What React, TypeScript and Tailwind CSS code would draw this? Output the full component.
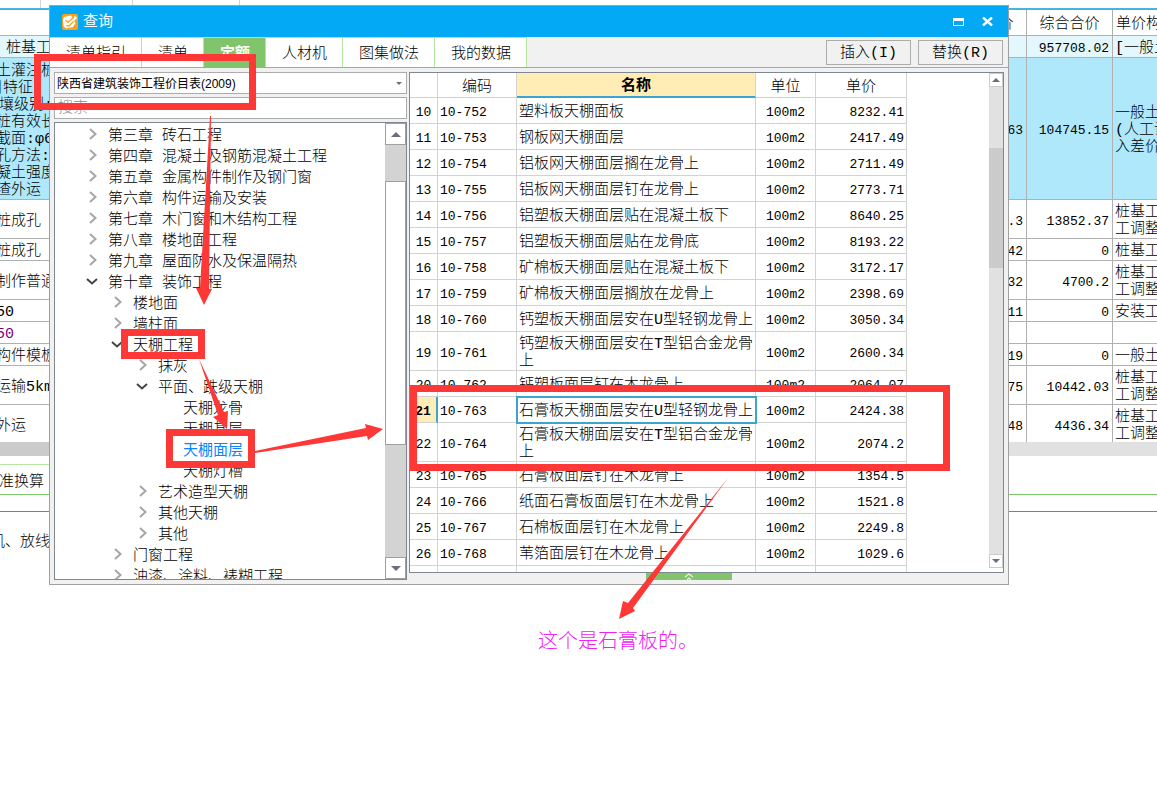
import { useState } from 'react';
import clsx from 'clsx';

type TreeItem = { label: string; level: number; state?: 'open' | 'closed' };
type Quota = { no: number; code: string; name: string; price: string; tall?: boolean };
type BillRow = {
  height: string;
  bg?: string;
  name: string[];
  nameClass?: string;
  unit: string;
  total: string;
  file: string[];
};

const TABS = ['清单指引', '清单', '定额', '人材机', '图集做法', '我的数据'];

const TREE: TreeItem[] = [
  { label: '第三章 砖石工程', level: 1, state: 'closed' },
  { label: '第四章 混凝土及钢筋混凝土工程', level: 1, state: 'closed' },
  { label: '第五章 金属构件制作及钢门窗', level: 1, state: 'closed' },
  { label: '第六章 构件运输及安装', level: 1, state: 'closed' },
  { label: '第七章 木门窗和木结构工程', level: 1, state: 'closed' },
  { label: '第八章 楼地面工程', level: 1, state: 'closed' },
  { label: '第九章 屋面防水及保温隔热', level: 1, state: 'closed' },
  { label: '第十章 装饰工程', level: 1, state: 'open' },
  { label: '楼地面', level: 2, state: 'closed' },
  { label: '墙柱面', level: 2, state: 'closed' },
  { label: '天棚工程', level: 2, state: 'open' },
  { label: '抹灰', level: 3, state: 'closed' },
  { label: '平面、跌级天棚', level: 3, state: 'open' },
  { label: '天棚龙骨', level: 4 },
  { label: '天棚基层', level: 4 },
  { label: '天棚面层', level: 4 },
  { label: '天棚灯槽', level: 4 },
  { label: '艺术造型天棚', level: 3, state: 'closed' },
  { label: '其他天棚', level: 3, state: 'closed' },
  { label: '其他', level: 3, state: 'closed' },
  { label: '门窗工程', level: 2, state: 'closed' },
  { label: '油漆、涂料、裱糊工程', level: 2, state: 'closed' },
];

const INDENT: Record<number, string> = {
  1: 'pl-[28px]',
  2: 'pl-[53px]',
  3: 'pl-[78px]',
  4: 'pl-[103px]',
};

const QUOTAS: Quota[] = [
  { no: 10, code: '10-752', name: '塑料板天棚面板', price: '8232.41' },
  { no: 11, code: '10-753', name: '钢板网天棚面层', price: '2417.49' },
  { no: 12, code: '10-754', name: '铝板网天棚面层搁在龙骨上', price: '2711.49' },
  { no: 13, code: '10-755', name: '铝板网天棚面层钉在龙骨上', price: '2773.71' },
  { no: 14, code: '10-756', name: '铝塑板天棚面层贴在混凝土板下', price: '8640.25' },
  { no: 15, code: '10-757', name: '铝塑板天棚面层贴在龙骨底', price: '8193.22' },
  { no: 16, code: '10-758', name: '矿棉板天棚面层贴在混凝土板下', price: '3172.17' },
  { no: 17, code: '10-759', name: '矿棉板天棚面层搁放在龙骨上', price: '2398.69' },
  { no: 18, code: '10-760', name: '钙塑板天棚面层安在U型轻钢龙骨上', price: '3050.34' },
  { no: 19, code: '10-761', name: '钙塑板天棚面层安在T型铝合金龙骨上', price: '2600.34', tall: true },
  { no: 20, code: '10-762', name: '钙塑板面层钉在木龙骨上', price: '2064.07' },
  { no: 21, code: '10-763', name: '石膏板天棚面层安在U型轻钢龙骨上', price: '2424.38' },
  { no: 22, code: '10-764', name: '石膏板天棚面层安在T型铝合金龙骨上', price: '2074.2', tall: true },
  { no: 23, code: '10-765', name: '石膏板面层钉在木龙骨上', price: '1354.5' },
  { no: 24, code: '10-766', name: '纸面石膏板面层钉在木龙骨上', price: '1521.8' },
  { no: 25, code: '10-767', name: '石棉板面层钉在木龙骨上', price: '2249.8' },
  { no: 26, code: '10-768', name: '苇箔面层钉在木龙骨上', price: '1029.6' },
];

const PILE = ['桩基工', '工调整'];

const BILL: BillRow[] = [
  { height: 'h-[22px]', bg: 'bg-[#e3f7fc]', name: ['桩基工程'], nameClass: 'pl-[17px]', unit: '', total: '957708.02', file: ['[一般土'] },
  {
    height: 'h-[142px]',
    bg: 'bg-[#b0e8fb]',
    name: ['土灌注桩', '目特征:', '壤级别:', '桩有效长', '截面:φ60', '孔方法:', '凝土强度', '渣外运'],
    unit: '63',
    total: '104745.15',
    file: ['一般土石', '(人工调', '入差价'],
  },
  { height: 'h-[39px]', name: ['桩成孔'], unit: '.3', total: '13852.37', file: PILE },
  { height: 'h-[22px]', name: ['桩成孔'], unit: '42', total: '0', file: ['桩基工'] },
  { height: 'h-[39px]', name: ['制作普通'], unit: '32', total: '4700.2', file: PILE },
  { height: 'h-[22px]', name: ['50'], unit: '11', total: '0', file: ['安装工'] },
  { height: 'h-[22px]', name: ['50'], nameClass: 'pl-[7px] text-[#800080]', unit: '', total: '', file: [''] },
  { height: 'h-[22px]', name: ['构件模板'], unit: '19', total: '0', file: ['一般土'] },
  { height: 'h-[39px]', name: ['运输5km'], unit: '75', total: '10442.03', file: PILE },
  { height: 'h-[39px]', name: ['外运'], unit: '48', total: '4436.34', file: PILE },
];

function Triangle({ up, small }: { up?: boolean; small?: boolean }) {
  return (
    <svg viewBox="0 0 10 5" className={small ? 'w-2 h-1' : 'w-[10px] h-[5px]'} fill="#6b6d7c">
      <path d={up ? 'M0 5 L5 0 L10 5Z' : 'M0 0 L5 5 L10 0Z'} />
    </svg>
  );
}

function Chevron({ open }: { open: boolean }) {
  return (
    <svg viewBox="0 0 12 12" className="-mt-[5px] h-3 w-3" fill="none" strokeWidth="2" stroke={open ? '#444444' : '#a6a6a6'}>
      <path d={open ? 'M1 4 L6 8.5 L11 4' : 'M4 1 L9.5 6 L4 11'} />
    </svg>
  );
}

function BillSheet() {
  const cell = 'border-r border-b border-[#b0b0b0] whitespace-nowrap px-0 pt-1 pb-0';
  return (
    <div className="overflow-hidden">
      <div className="flex h-2">
        <div className="w-[41px] border-r border-[#d3d3d3]" />
        <div className="w-[92px] border-r border-[#d3d3d3]" />
        <div className="w-[107px] border-r border-[#d3d3d3]" />
      </div>
      <table className="-ml-[11px] w-[calc(100%+64px)] table-fixed border-separate border-spacing-0 border-t-2 border-[#44b4e4] leading-[17px]">
        <colgroup>
          <col className="w-[300px]" />
          <col />
          <col className="w-[86px]" />
          <col className="w-[86px]" />
          <col className="w-[97px]" />
        </colgroup>
        <thead>
          <tr className="h-[26px]">
            <th className={cell} />
            <th className={cell} />
            <th className={clsx(cell, 'font-light')}>综合单价</th>
            <th className={clsx(cell, 'font-light')}>综合合价</th>
            <th className={clsx(cell, 'pl-[3px] text-left font-light')}>单价构成</th>
          </tr>
        </thead>
        <tbody>
          {BILL.map((row, i) => (
            <tr key={i} className={clsx(row.height, row.bg)}>
              <td className={clsx(cell, row.nameClass ?? 'pl-[7px]')}>
                {row.name.map((line, n) => (
                  <div key={n} className={clsx(line === '目特征:' && '-ml-2', line === '壤级别:' && 'ml-[3px]')}>
                    {line}
                  </div>
                ))}
              </td>
              <td className={cell} />
              <td className={clsx(cell, 'pr-[3px] text-right text-[13px]')}>{row.unit}</td>
              <td className={clsx(cell, 'pr-[3px] text-right text-[13px]')}>{row.total}</td>
              <td className={clsx(cell, 'pl-[2px]')}>
                {row.file.map((line, n) => (
                  <div key={n}>{line}</div>
                ))}
              </td>
            </tr>
          ))}
        </tbody>
      </table>
      <div className="relative -mt-[2px] flex h-[14px] bg-[#e1e1e1]">
        <div className="w-1/2 bg-[#cbcbcb]" />
      </div>
      <div className="mt-2 flex h-[31px] border-b border-b-[#7cc767]">
        <div className="w-[200px] border-t border-r border-[#b4e6a0] leading-[35px]">
          <span className="-ml-px">准换算</span>
        </div>
      </div>
      <div className="mt-4 border-t border-[#808080] pt-5">
        <span className="-ml-[10px]">机、放线</span>
      </div>
    </div>
  );
}

function TreePanel() {
  const [selected, setSelected] = useState('天棚面层');
  return (
    <div className="flex min-h-0 flex-1 border border-[#7f8790] bg-white">
      <ul className="min-w-0 flex-1 overflow-hidden pt-[3px]">
        {TREE.map((item) => (
          <li key={item.label} className={clsx('flex h-[21px] items-center whitespace-nowrap', INDENT[item.level])}>
            <span className="w-[25px] shrink-0 pl-[3px]">
              {item.state && <Chevron open={item.state === 'open'} />}
            </span>
            <button
              type="button"
              onClick={() => setSelected(item.label)}
              className={clsx('leading-[21px]', selected === item.label && 'font-normal text-[#0a84ff]')}
            >
              {item.label}
            </button>
          </li>
        ))}
      </ul>
      <div className="flex w-[21px] flex-col bg-[#d3d3d3]">
        <button type="button" aria-label="向上" className="flex h-[22px] items-center justify-center border border-[#a0a0a0] bg-white">
          <Triangle up />
        </button>
        <div className="mt-9 h-[264px] border border-[#a0a0a0] bg-white" />
        <button type="button" aria-label="向下" className="mt-auto flex h-[22px] items-center justify-center border border-[#a0a0a0] bg-white">
          <Triangle />
        </button>
      </div>
    </div>
  );
}

function QuotaTable() {
  const cell = 'border-r border-b border-[#d3d3d3] px-[2px] pt-1 pb-0';
  return (
    <div className="flex min-h-0 flex-1 border border-[#7f8790] bg-white">
      <div className="min-w-0 flex-1 overflow-hidden">
        <table className="w-[497px] table-fixed border-separate border-spacing-0 leading-[17px]">
          <colgroup>
            <col className="w-[28px]" />
            <col className="w-[79px]" />
            <col className="w-[239px]" />
            <col className="w-[60px]" />
            <col className="w-[91px]" />
          </colgroup>
          <thead>
            <tr className="h-[25px]">
              <th className={cell} />
              <th className={clsx(cell, 'font-light')}>编码</th>
              <th className={clsx(cell, 'border-b-2 !border-b-[#3ba4d0] bg-[#ffedb5] font-bold')}>名称</th>
              <th className={clsx(cell, 'font-light')}>单位</th>
              <th className={clsx(cell, 'font-light')}>单价</th>
            </tr>
          </thead>
          <tbody>
            {QUOTAS.map((q) => {
              const current = q.no === 21;
              return (
                <tr key={q.no} className={q.tall ? 'h-[39px]' : 'h-[26px]'}>
                  <td
                    className={clsx(
                      cell,
                      'text-center text-[13px]',
                      current && 'border-r-2 !border-r-[#3ba4d0] bg-[#ffedb5] font-bold',
                    )}
                  >
                    {q.no}
                  </td>
                  <td className={clsx(cell, 'text-[13px]')}>{q.code}</td>
                  <td className={clsx(cell, current && 'outline-2 -outline-offset-1 outline-[#3ba4d0]')}>{q.name}</td>
                  <td className={clsx(cell, 'text-center text-[13px]')}>100m2</td>
                  <td className={clsx(cell, 'text-right text-[13px]')}>{q.price}</td>
                </tr>
              );
            })}
            <tr className="h-[26px]">
              <td className={cell} />
              <td className={cell} />
              <td className={cell} />
              <td className={cell} />
              <td className={cell} />
            </tr>
          </tbody>
        </table>
      </div>
      <div className="mb-1 flex w-[14px] flex-col bg-[#e1e1e1]">
        <button type="button" aria-label="向上" className="flex h-[14px] items-center justify-center border border-[#cbcbcb] bg-white">
          <Triangle up small />
        </button>
        <div className="mt-[61px] h-[120px] bg-[#cbcbcb]" />
        <button type="button" aria-label="向下" className="mt-auto flex h-[14px] items-center justify-center border border-[#cbcbcb] bg-white">
          <Triangle small />
        </button>
      </div>
    </div>
  );
}

function QueryDialog() {
  const [tab, setTab] = useState('定额');
  return (
    <section className="absolute top-[5px] right-[148px] left-[49px] flex h-[580px] flex-col border border-[#a0a0a0] bg-[#f1f1f1]">
      <header className="flex h-[31px] shrink-0 items-center bg-[#03a9f4] pr-[15px] pl-3 text-white">
        <svg viewBox="0 0 16 16" className="h-4 w-4">
          <rect width="16" height="16" rx="2" fill="#f9a21b" />
          <path d="M2 3 L9 1.5 L10.5 4 L13 2 L15 4 L12 7 L13.5 9 L11 13 L4 14.5 L1.5 12 L1 6Z" fill="#fff" />
          <path d="M3.5 6 L6 8.5 L12 3 M4 11.5 L7 12 L11.5 7.5" fill="none" stroke="#f9a21b" strokeWidth="1.2" />
        </svg>
        <h1 className="ml-[5px] flex-1 pt-1 font-normal">查询</h1>
        <button type="button" aria-label="最大化" className="mr-[18px]">
          <svg viewBox="0 0 11 8" className="h-2 w-[11px]">
            <path d="M0 0H11V8H0Z M1 3V7H10V3Z" fill="#fff" fillRule="evenodd" />
          </svg>
        </button>
        <button type="button" aria-label="关闭">
          <svg viewBox="0 0 11 9" className="h-[9px] w-[11px]" stroke="#fff" strokeWidth="2.4">
            <path d="M1 0.5 L10 8.5 M10 0.5 L1 8.5" />
          </svg>
        </button>
      </header>

      <div className="flex h-[31px] shrink-0 border-b border-b-[#7cc767] pr-[5px]">
        {TABS.map((name) => (
          <button
            key={name}
            type="button"
            onClick={() => setTab(name)}
            className={clsx(
              'border-t border-r border-[#b4e6a0] pt-[6px] pr-[15px] pl-4',
              tab === name ? 'bg-[#80c46b] font-bold text-white' : 'bg-white',
            )}
          >
            {name}
          </button>
        ))}
        <div className="ml-auto flex items-center gap-[7px]">
          <button type="button" className="h-[25px] w-[85px] border border-[#acacac] leading-[25px]">插入(I)</button>
          <button type="button" className="h-[25px] w-[85px] border border-[#acacac] leading-[25px]">替换(R)</button>
        </div>
      </div>

      <div className="flex min-h-0 flex-1 gap-[2px] pr-1 pb-1 pl-1 pt-1">
        <div className="flex w-[353px] shrink-0 flex-col gap-[3px]">
          <div className="relative flex">
            <select
              aria-label="定额库"
              className="h-[22px] w-full appearance-none border border-[#acacac] bg-white px-[2px] pt-px font-['Liberation_Sans','Noto_Sans_CJK_SC',sans-serif] text-xs font-normal"
            >
              <option>陕西省建筑装饰工程价目表(2009)</option>
            </select>
            <span className="pointer-events-none absolute top-[10px] right-[5px] flex">
              <svg viewBox="0 0 6 3" className="h-[3px] w-[6px]" fill="#6b6d7c">
                <path d="M0 0H6L3 3Z" />
              </svg>
            </span>
          </div>
          <input
            type="text"
            aria-label="搜索"
            placeholder="搜索"
            className="h-[22px] border border-[#acacac] bg-white px-[3px] pt-[3px] placeholder:text-[#8c8c8c]"
          />
          <TreePanel />
        </div>
        <div className="flex min-w-0 flex-1 flex-col">
          <QuotaTable />
          <button type="button" aria-label="展开" className="mr-9 flex h-[7px] w-[86px] justify-center self-center bg-[#80c46b]">
            <svg viewBox="0 0 10 7" className="h-[7px] w-[10px]" fill="none" stroke="#e8f5e3" strokeWidth="1.2">
              <path d="M1 4 L5 1 L9 4 M3 7 L5 5 L7 7" />
            </svg>
          </button>
        </div>
      </div>
    </section>
  );
}

function Annotations() {
  return (
    <div className="pointer-events-none absolute inset-0 overflow-hidden">
      <div className="absolute top-[54px] left-[34px] h-[56px] w-[222px] border-7 border-[#fd3837]" />
      <div className="absolute top-[329px] left-[121px] h-[30px] w-[84px] border-7 border-[#fd3837]" />
      <div className="absolute top-[429px] left-[166px] h-[39px] w-[89px] border-7 border-[#fd3837]" />
      <div className="absolute top-[385px] left-[410px] h-[86px] w-[540px] border-7 border-[#fd3837]" />
      <svg width="760" height="640" viewBox="0 0 760 640" className="absolute top-0 left-0" fill="#fd3837">
        <path d="M210 116 L211 116 L209 289 L212 289 L204 305 L196 288 L200 288Z" />
        <path d="M199 359 L224 412 L228 411 L227 429 L213 417 L218 415Z" />
        <path d="M255 451 L366 428 L365 424 L383 429 L368 440 L367 436 L255 453Z" />
        <path d="M728 478 L633 608 L635 611 L619 619 L623 601 L628 603Z" />
      </svg>
      <p className="absolute top-[628px] left-[538px] text-xl leading-[30px] text-[#ee22f5]">这个是石膏板的。</p>
    </div>
  );
}

function App() {
  return (
    <main className="relative min-h-screen overflow-hidden bg-white font-['Liberation_Mono','Noto_Sans_CJK_SC',monospace] text-[15px] font-light text-black">
      <BillSheet />
      <QueryDialog />
      <Annotations />
    </main>
  );
}

export default App;
